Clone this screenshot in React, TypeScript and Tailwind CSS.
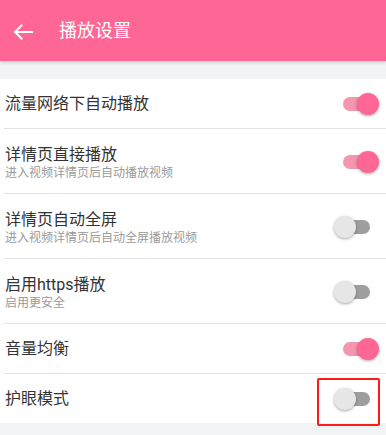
import React from 'react'

interface SettingItem {
  title: string
  desc?: string
  on: boolean
  marked?: boolean
}

const items: SettingItem[] = [
  { title: '流量网络下自动播放', on: true },
  { title: '详情页直接播放', desc: '进入视频详情页后自动播放视频', on: true },
  { title: '详情页自动全屏', desc: '进入视频详情页后自动全屏播放视频', on: false },
  { title: '启用https播放', desc: '启用更安全', on: false },
  { title: '音量均衡', on: true },
  { title: '护眼模式', on: false, marked: true },
]

function Toggle({ on }: { on: boolean }) {
  return (
    <div className="relative w-[45px] h-[22px] shrink-0">
      <div
        className={`absolute left-[9px] right-[9px] top-[4px] h-[14px] rounded-full ${
          on ? 'bg-[#f695ae]' : 'bg-[#9e9e9e]'
        }`}
      />
      <div
        className={`absolute top-0 w-[22px] h-[22px] rounded-full shadow-[0_1px_3px_rgba(0,0,0,0.35)] ${
          on ? 'right-0 bg-[#fe6795]' : 'left-0 bg-[#e6e6e6]'
        }`}
      />
    </div>
  )
}

export default function App() {
  return (
    <div
      className="w-[386px] h-[435px] bg-[#f2f3f5] overflow-hidden"
      style={{ fontFamily: 'Roboto, "Noto Sans CJK SC", sans-serif' }}
    >
      {/* Header */}
      <div className="h-[61px] bg-[#fe6795] flex items-center shadow-[0_2px_3px_rgba(0,0,0,0.14)] relative">
        <svg className="ml-[13px] mt-[2px]" width="20" height="16" viewBox="0 0 20 16" fill="none">
          <path d="M19 8H2M8.5 1.5L2 8l6.5 6.5" stroke="white" strokeWidth="2" strokeLinecap="square" />
        </svg>
        <span className="ml-[26px] text-[18px] text-white leading-none">播放设置</span>
      </div>

      {/* List */}
      <div className="mt-[18px] bg-white">
        {items.map((item, i) => (
          <div key={item.title}>
            {i > 0 && <div className="ml-[4px] h-px bg-[#e2e2e2]" />}
            <div
              className={`relative flex items-center justify-between pl-[5px] pr-[7px] ${
                item.desc ? 'h-[64px] pt-[2px]' : 'h-[49px]'
              }`}
            >
              <div className="flex flex-col gap-[2px]">
                <span className="text-[16px] leading-[19px] text-[#333333]">{item.title}</span>
                {item.desc && (
                  <span className="text-[12px] leading-[14px] text-[#9a9a9a]">{item.desc}</span>
                )}
              </div>
              <Toggle on={item.on} />
              {item.marked && (
                <div className="absolute right-[6px] top-[4px] w-[63px] h-[48px] border-2 border-[#ff1a1a] rounded-[2px]" />
              )}
            </div>
          </div>
        ))}
      </div>
    </div>
  )
}
